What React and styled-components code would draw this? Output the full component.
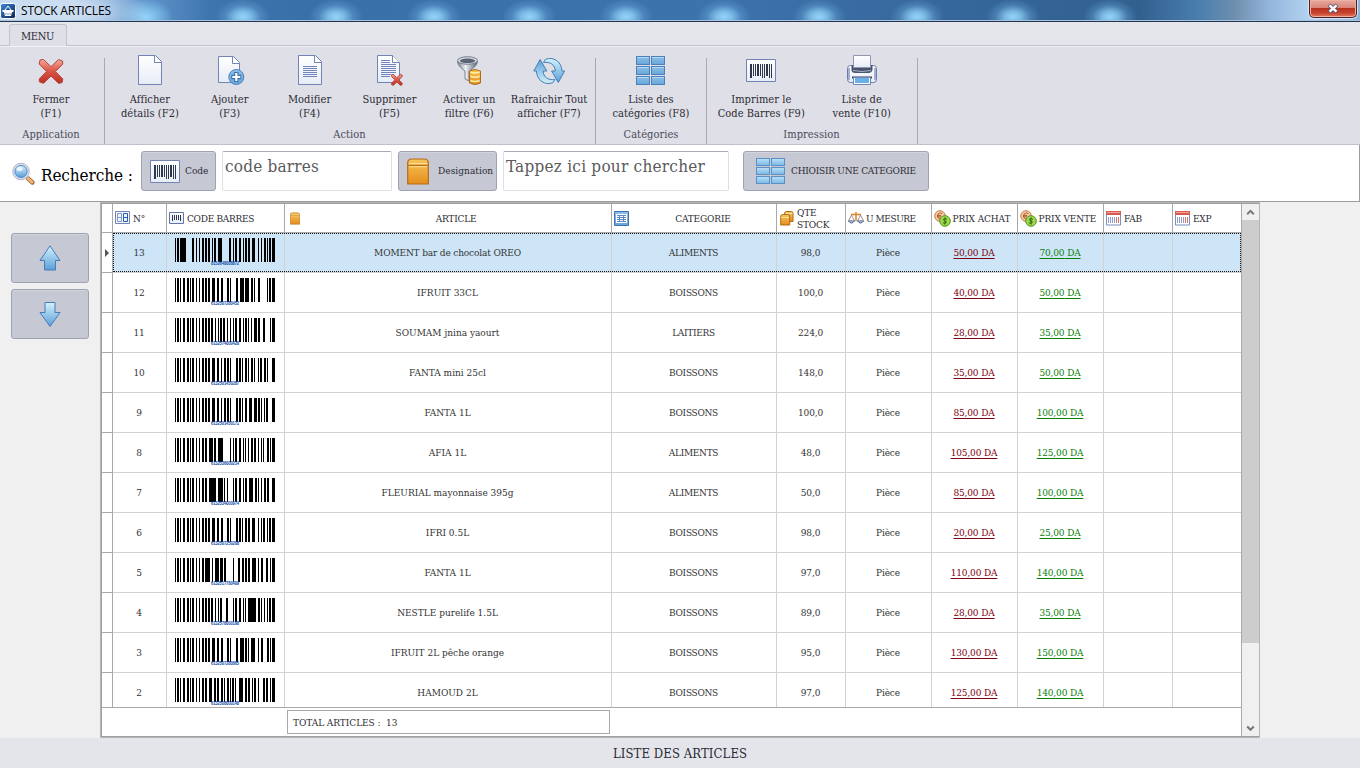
import React from "react";
import styled, { createGlobalStyle } from "styled-components";

const Global = createGlobalStyle`
  * { box-sizing: border-box; }
  body { margin: 0; overflow: hidden; background: #f0f0f0; }
`;
const serif = `"DejaVu Serif Condensed", "DejaVu Serif", serif`;

const glow = [243, 336, 434, 529, 626, 724, 819, 917, 1013, 1110]
  .map((x) => `radial-gradient(ellipse 27px 18px at ${x}px 17px, #93d4fa 0, #8ccdf5cc 30%, #6fb0e055 65%, #6fb0e000 100%)`)
  .join(",");

const Window = styled.div`
  width: 1360px; height: 768px; display: flex; flex-direction: column;
  font-family: ${serif}; font-stretch: condensed; font-size: 10px; color: #2b2b33;
  background: #f0f0f0; white-space: nowrap;
`;
const TitleBar = styled.header`
  height: 22px; flex: none; display: flex; justify-content: space-between; align-items: flex-start;
  border-bottom: 1px solid #253650; box-shadow: inset 0 -1px 0 #a9c3dd; padding: 0 3px 0 0;
  background:
    radial-gradient(ellipse 110px 30px at 40px 11px, #cfe0f2 0, #c8dbf0 45%, #b3cfea88 75%, #b3cfea00 100%),
    radial-gradient(ellipse 27px 18px at 146px 17px, #93d4fa 0, #8ccdf5cc 30%, #8ccdf500 100%),
    ${glow},
    linear-gradient(90deg, #a9c8e6 0, #8fb4dc 90px, #5d92ca 150px, #3f75ad 210px, #3a70aa 300px, #3c73ad 700px, #38699f 900px, #31608f 1140px, #4b7fae 1200px, #6f8fae 1235px, #94b6dc 1270px, #b4d3f2 1310px, #8cb0d6 1360px);
`;
const Title = styled.div`
  display: flex; align-items: center; gap: 5px; height: 21px; font: 12px "Open Sans", sans-serif;
  letter-spacing: -0.2px; color: #000;
`;
const CloseButton = styled.button`
  width: 48px; height: 18px; padding: 0 0 1px; display: grid; place-items: center; border: 1px solid #4c1f20; border-top: 0;
  border-radius: 0 0 5px 5px; box-shadow: inset 0 0 0 1px #efb0a4, 0 0 1px 1px #d9e6f4;
  background: linear-gradient(#e8aba0 0, #d98578 45%, #b8331f 50%, #c8412c 75%, #e07a5c);
`;
const MenuStrip = styled.nav`
  height: 24px; flex: none; background: #e5e6eb; border-bottom: 1px solid #c0c1ca; padding: 2px 0 0 9px; display: flex;
`;
const MenuTab = styled.div`
  width: 58px; height: 22px; display: grid; place-items: center; padding: 2px 1px 0 0; font-size: 11px; letter-spacing: -0.3px;
  background: #dfdfe8; border: 1px solid #c2c3cc; border-bottom: 0; border-radius: 3px 3px 0 0;
`;
const Ribbon = styled.section`
  height: 99px; flex: none; display: flex; background: #dfdfe8; border-top: 1px solid #f2f2f6; border-bottom: 1px solid #bfc0ca;
`;
const Group = styled.div`
  width: ${(p) => p.$w}px; height: 97px; display: flex; flex-direction: column;
  padding: 7px ${(p) => p.$pr ?? 5}px 0 ${(p) => p.$pl ?? 4}px;
  background: linear-gradient(#a9a9b0, #a9a9b0) right 0 bottom 0 / 1px 86px no-repeat;
`;
const Items = styled.div`display: flex; height: 73px;`;
const Item = styled.div`
  flex: 1 1 0; min-width: 0; display: flex; flex-direction: column; align-items: center; text-align: center;
  font-size: 11px; line-height: 14px; letter-spacing: 0.04px;
  svg { flex: none; margin-bottom: 7px; }
`;
const Line = styled.span`display: block;`;
const GroupName = styled.div`
  text-align: center; font-size: 11px; line-height: 14px; color: #4a4a58; margin-top: 1px; letter-spacing: 0.05px;
`;
const SearchBar = styled.section`
  height: 57px; flex: none; display: flex; align-items: flex-start; padding: 6px 0 0 11px; background: #fff;
  border-right: 1px solid #9c9c9c; border-bottom: 1px solid #9c9c9c;
`;
const SearchLabel = styled.div`
  width: 130px; height: 40px; display: flex; align-items: center; gap: 5px; font-size: 17px; color: #000; letter-spacing: -0.1px;
  span { padding-top: 8px; }
  svg { margin-top: 6px; }
`;
const Button = styled.button`
  width: ${(p) => p.$w}px; height: ${(p) => p.$h || 40}px; margin: 0 ${(p) => p.$mr || 0}px 0 0;
  padding: 0 0 0 ${(p) => p.$pl || 0}px; display: flex; align-items: center; justify-content: ${(p) => (p.$center ? "center" : "flex-start")};
  gap: ${(p) => p.$gap || 0}px; background: #c6c8d4; border: 1px solid #9ea2b2; border-radius: 3px;
  box-shadow: inset 0 1px 0 #d2d4de; font-family: inherit; font-stretch: inherit; font-size: 10px; color: #2b2b33;
  letter-spacing: ${(p) => p.$ls || 0}px; white-space: nowrap;
`;
const ButtonText = styled.span`padding-bottom: 2px;`;
const Field = styled.div`
  width: ${(p) => p.$w}px; height: 40px; margin-right: ${(p) => p.$mr}px; padding: 3px 0 0 2px; border: 1px solid #dddfe6;
  border-top-color: #a9abb3; border-radius: 2px; color: #5a5a5a; font-size: 17px; line-height: 23px; letter-spacing: ${(p) => p.$ls}px;
`;
const Main = styled.main`height: 536px; flex: none; display: flex;`;
const Side = styled.aside`width: 100px; padding: 31px 0 0 11px; display: flex; flex-direction: column; gap: 6px;`;
const Grid = styled.section`
  width: 1160px; height: 536px; display: flex; border: 1px solid #b4b4b4; box-shadow: inset 1px 1px 0 #a0a0a0, inset 0 -1px 0 #a0a0a0;
  padding: 1px 0 1px 1px; background: #fff;
`;
const Sheet = styled.div`width: 1140px; display: flex; flex-direction: column; border-right: 1px solid #a9a9a9;`;
const columns = "11px 54px 118px 327px 165px 69px 86px 86px 86px 69px 68px";
const Head = styled.div`
  display: grid; grid-template-columns: ${columns}; height: 29px; flex: none; border-bottom: 1px solid #a9a9a9;
`;
const HeadCell = styled.div`
  border-right: 1px solid #a9a9a9; display: flex; align-items: center; gap: ${(p) => p.$gap || 4}px; padding: 0 0 0 ${(p) => p.$pl ?? 2}px;
  line-height: 12px; letter-spacing: ${(p) => p.$ls ?? -0.2}px; overflow: hidden;
  &:last-child { border-right: 0; }
  svg { flex: none; }
`;
const HeadText = styled.span`
  flex: ${(p) => (p.$fill ? 1 : "none")}; text-align: ${(p) => (p.$fill ? "center" : "left")};
  padding: 1px ${(p) => (p.$fill ? 3 : 0)}px 0 0;
`;
const Rows = styled.div`height: 475px; flex: none; overflow: hidden; border-bottom: 1px solid #a9a9a9;`;
const Row = styled.div`
  display: grid; grid-template-columns: ${columns}; height: 40px; position: relative;
  background: ${(p) => (p.$selected ? "linear-gradient(90deg, #fff 11px, #cde5f7 11px)" : "#fff")};
  &::after {
    content: ""; display: ${(p) => (p.$selected ? "block" : "none")}; position: absolute; inset: 0 0 1px 11px; border: 1px dotted #111;
  }
`;
const Cell = styled.div`
  border-right: 1px solid #d2d2d2; border-bottom: 1px solid #d2d2d2; display: grid; place-items: center; padding-right: 1px;
  color: ${(p) => p.$color || "#333"}; text-decoration: ${(p) => (p.$color ? "underline" : "none")};
  letter-spacing: ${(p) => p.$ls ?? -0.15}px; text-underline-offset: 1.5px;
  &:first-child { border-color: #a9a9a9; padding: 0; }
  &:last-child { border-right: 0; }
`;
const BarCell = styled(Cell)`place-items: start; padding: 5px 0 0 8px; line-height: 0;`;
const Totals = styled.div`height: 28px; padding: 2px 0 0 185px;`;
const TotalBox = styled.div`
  width: 323px; height: 24px; border: 1px solid #a9a9a9; padding-left: 5px; line-height: 23px; letter-spacing: -0.05px; white-space: pre;
`;
const Scroll = styled.div`
  width: 17px; display: flex; flex-direction: column; align-items: center; justify-content: space-between; background: #f0f0f0;
`;
const ScrollEnd = styled.div`height: 16px; display: grid; place-items: center;`;
const Thumb = styled.div`width: 17px; height: 423px; background: #cdcdcd; margin-bottom: auto;`;
const Status = styled.footer`
  height: 30px; flex: none; background: #e4e5eb; display: grid; place-items: center; font-size: 13px; letter-spacing: 0.08px; color: #2b2b33;
`;
const DefsSvg = styled.svg`position: absolute; width: 0; height: 0;`;

const Defs = () => (
  <DefsSvg>
    <defs>
      <linearGradient id="page" x2="0" y2="1"><stop stopColor="#fff" /><stop offset="1" stopColor="#e6ecf7" /></linearGradient>
      <linearGradient id="red" x2="0" y2="1"><stop stopColor="#f5a99b" /><stop offset=".45" stopColor="#dc5a4b" /><stop offset="1" stopColor="#bd2f25" /></linearGradient>
      <linearGradient id="blue" x2="0" y2="1"><stop stopColor="#d3f2fc" /><stop offset="1" stopColor="#5b9fd8" /></linearGradient>
      <linearGradient id="tile" x2="0" y2="1"><stop stopColor="#8fc0e6" /><stop offset="1" stopColor="#66a6db" /></linearGradient>
      <linearGradient id="tileLight" x2="0" y2="1"><stop stopColor="#b9e0f7" /><stop offset="1" stopColor="#79b8e6" /></linearGradient>
      <linearGradient id="gold" x2="0" y2="1"><stop stopColor="#f6c55a" /><stop offset="1" stopColor="#e58e1c" /></linearGradient>
      <linearGradient id="steel" x2="1"><stop stopColor="#717c8c" /><stop offset=".4" stopColor="#f0f3f6" /><stop offset="1" stopColor="#56606f" /></linearGradient>
      <linearGradient id="navy" x1="0" x2="1" y2="1"><stop stopColor="#3d8ad8" /><stop offset="1" stopColor="#0c2250" /></linearGradient>
    </defs>
  </DefsSvg>
);
const Svg = ({ w = 32, h = w, vb, children }) => <svg width={w} height={h} viewBox={vb || `0 0 ${w} ${h}`} fill="none">{children}</svg>;

const crossPath = "M5 4.5 8.5 4 16 11.2 23.5 4 27.5 5.5 27.8 8.5 20.4 16 27.8 23.5 27 27.2 23.5 27.8 16 20.5 8.5 27.8 4.5 26.5 4.2 23.5 11.6 16 4.2 8.5Z";
const CrossIcon = () => <Svg><path transform="translate(0 1.500)" d={crossPath} fill="url(#red)" stroke="#b5443c" strokeLinejoin="round" /></Svg>;
const BlankSheet = ({ lines }) => (
  <>
    <path d="M4.500 1.500h17l6 6v23h-23z" fill="url(#page)" stroke="#7384b4" />
    <path d="M20.500 1.500v7h7" fill="#fff" stroke="#7384b4" />
    {lines && <path d={lines} stroke="#7283bd" />}
  </>
);
const PageIcon = () => <Svg><BlankSheet /></Svg>;
const EditPageIcon = () => <Svg><BlankSheet lines="M9 12.500h14M9 14.500h14M9 16.500h14M9 18.500h14M9 20.500h14M9 22.500h14" /></Svg>;
const AddPageIcon = () => (
  <Svg>
    <path d="M4.500 2.500h15l6 6v20h-21z" fill="url(#page)" stroke="#7384b4" /><path d="M18.500 2.500v7h7" fill="#fff" stroke="#7384b4" />
    <circle cx="22.300" cy="23" r="7.500" fill="url(#tile)" stroke="#4a83bb" /><path d="M22.300 18v10M17.300 23h10" stroke="#3d73ad" strokeWidth="4.400" /><path d="M22.300 19v8M18.300 23h8" stroke="#fff" strokeWidth="2.200" />
  </Svg>
);
const DeletePageIcon = () => (
  <Svg>
    <path d="M4.500 1.500h15l7 7v20h-22z" fill="url(#page)" stroke="#7384b4" /><path d="M19.500 1.500v7h7" fill="#fff" stroke="#7384b4" />
    <path d="M8 6.500h9M8 8.500h9M8 10.500h15M8 12.500h15M8 14.500h15M8 16.500h15M8 18.500h15M8 20.500h10M8 22.500h9" stroke="#7283bd" />
    <g transform="translate(16.500 18.500) scale(.46)"><path d={crossPath} fill="url(#red)" stroke="#b5443c" strokeWidth="2" /></g>
  </Svg>
);
const FilterIcon = () => (
  <Svg>
    <path d="M4.500 7c0 5 5 8 7.500 10v8l4 2v-10C20 15 24.500 11 24.500 7z" fill="url(#steel)" stroke="#7a8391" />
    <ellipse cx="14.500" cy="6.500" rx="10" ry="3.800" fill="#cfd5dd" stroke="#7a8391" /><ellipse cx="14.500" cy="6.800" rx="7.500" ry="2.300" fill="#5a6474" />
    <path d="M16.500 17q5.500-3 11 0v12q-5.500 3-11 0z" fill="url(#gold)" stroke="#b26a16" />
    <path d="M17.500 18q4.500 2 9 0M17.500 22.300q4.500 2 9 0M17.500 26.500q4.500 2 9 0" stroke="#fff0ad" strokeWidth="1.600" />
  </Svg>
);
const refreshArm = "M10.500 8.500 12.500 5.300C20 2.500 28.500 7 29 17h2.600L25.300 28.500 18.600 17h3.600c0-6-5-9.500-11.700-8.500z";
const RefreshIcon = () => (
  <Svg>
    <g fill="url(#blue)" stroke="#447fb6" strokeLinejoin="round">
      <path d={refreshArm} /><path transform="rotate(180 16.200 17)" d={refreshArm} />
    </g>
  </Svg>
);
const TilesIcon = ({ light }) => (
  <Svg>
    {[1.5, 16.5].map((x) => (light ? [3.5, 12.5, 21.5] : [2.5, 12.5, 22.5]).map((y) => (
      <g key={`${x}-${y}`}>
        <rect x={x} y={y} width="13" height={light ? 7 : 8} fill={light ? "url(#tileLight)" : "url(#tile)"} stroke={light ? "#5b8fc6" : "#4d80bb"} />
        <path d={`M${x + 1} ${y + 1}h11`} stroke="#b5daf4" />
      </g>
    )))}
  </Svg>
);
const BarsIcon = () => (
  <Svg>
    <path d="M1.500 5.500h29v22h-29z" fill="url(#page)" stroke="#7384b4" />
    <path d="M5 10h2v14H5zM8 10h1v12H8zM10 10h1v12h-1zM12 10h2v12h-2zM15 10h1v12h-1zM17 10h1v14h-1zM19 10h1v14h-1zM21 10h2v12h-2zM24 10h1v14h-1zM26 10h1v14h-1z" fill="#2e374c" />
  </Svg>
);
const SmallBarsIcon = () => (
  <Svg w={16}><path d="M.5 2.500h14v11H.5z" fill="url(#page)" stroke="#6376b0" /><path d="M3 5h1v6H3zM5 5h1v5H5zM7 5h1v5H7zM9 5h1v5H9zM11 5h1v6h-1z" fill="#2e374c" /></Svg>
);
const PrinterIcon = () => (
  <Svg>
    <rect x="1.500" y="11.500" width="29" height="17" rx="3" fill="url(#page)" stroke="#6a7bb0" />
    <path d="M3 14v12M29 14v12" stroke="#a5b0d4" strokeWidth="2" />
    <path d="M5.500 11h21v5q-1 3-4 3h-13q-4 0-4-3z" fill="#48536c" /><path d="M7 16.500q9 2 18 0" stroke="#a8b1c6" />
    <path d="M7.500 1.500h17v12h-17z" fill="url(#page)" stroke="#9098b0" />
    <path d="M6 23.500h20" stroke="#39455f" strokeWidth="2" /><path d="M7.500 23.500h17v7h-17z" fill="#fff" stroke="#7384b4" /><path d="M9 24h14v5H9z" fill="#68b0e6" />
  </Svg>
);
const BasketIcon = () => (
  <Svg w={16}><rect x=".5" y=".5" width="15" height="15" rx="2" fill="url(#navy)" stroke="#fff" /><path d="m5 7 3-4 3 4" stroke="#fff" /><path d="M2.500 7h11v2h-11zM4 9h8l-1 4H5z" fill="#fff" /><path d="M6 10v2M8 10v2M10 10v2" stroke="#4a74a8" strokeWidth=".7" /></Svg>
);
const SearchIcon = () => (
  <Svg w={25}><path d="m17 16.500 4.500 4" stroke="#a56b36" strokeWidth="4.400" strokeLinecap="round" /><path d="m17 16.500 4 3.600" stroke="#f0b678" strokeWidth="2.800" strokeLinecap="round" /><circle cx="10" cy="9.500" r="8.300" fill="#d5dbea" stroke="#b3b8cd" /><circle cx="10" cy="9.500" r="6" fill="url(#blue)" stroke="#5585cf" /><ellipse cx="8.500" cy="7" rx="3" ry="2.200" fill="#fff" opacity=".75" /></Svg>
);
const BoxIcon = ({ w = 22, h = 27 }) => (
  <Svg w={w} h={h} vb="0 0 22 27"><path d="M.7 26V5q0-4 4-4h12.600q4 0 4 4v21z" fill="url(#gold)" stroke="#b36a1c" strokeWidth="1.200" /><path d="M1.500 7.500h19" stroke="#b96d16" strokeWidth="1.200" /><path d="M2 5.500h18M2 8.700h18" stroke="#fbe09a" /></Svg>
);
const BoxesIcon = () => (
  <Svg w={14} h={16}><path d="M4.500 11.500v-8q0-2 2-2h5q1.500 0 1.500 2v8z" fill="url(#gold)" stroke="#b3681a" /><path d="M5.500 3.500h7" stroke="#fbe09a" /><path d="M.7 15V6.500q0-2 2-2h5q2 0 2 2V15z" fill="url(#gold)" stroke="#b3681a" /><path d="M1.500 7.500h7.500" stroke="#fbe09a" /></Svg>
);
const ArrowIcon = ({ down }) => (
  <Svg w={22} h={26}>
    <path d={down ? "M11 25.500 1 11.500h5v-10h10v10h5z" : "M11 .8 21 15.500h-4.500v9.500h-11v-9.500H1z"} fill="url(#blue)" stroke="#4a7ab8" strokeLinejoin="round" />
  </Svg>
);
const NumberIcon = () => (
  <Svg w={15} h={14}><path d="M.5.500h14v12H.5z" fill="#f2f6fc" stroke="#7384b4" /><path d="M2.500 2.500h4v8h-4zM2.500 6.500h4" stroke="#8298c0" /><path d="M8.500 2.500h4v8h-4zM8.500 6.500h4" stroke="#1f5fb8" /></Svg>
);
const TableIcon = () => (
  <Svg w={15} h={15}><path d="M.5.500h14v14H.5z" fill="url(#tile)" stroke="#3f70b6" /><path d="M2 3h11v9H2z" fill="#fff" /><path d="M3 4.500h9M3 6.500h9M3 8.500h9M3 10.500h9M5.500 4v7M9.500 4v7" stroke="#5f88c2" /></Svg>
);
const ScaleIcon = () => (
  <Svg w={16} h={15}><path d="M8 1v9M3 3.500h10" stroke="#d3862f" strokeWidth="1.500" /><circle cx="8" cy="2.300" r="1.300" fill="#eda842" /><path d="m3.500 4-3 6m3-6 3 6M12.500 4l-3 6m3-6 3 6" stroke="#8a7774" strokeWidth=".8" /><path d="M.5 10h6q-3 4-6 0zM9.500 10h6q-3 4-6 0z" fill="#f2f5fb" stroke="#42578d" /></Svg>
);
const CoinsIcon = () => (
  <Svg w={17} h={17}>
    <circle cx="6" cy="6" r="5.300" fill="#f3cda0" stroke="#c47a4a" /><path d="M8.500 3.800a3 3 0 1 0 0 4.400M3 5.400h4M3 6.800h4" stroke="#b35a2b" />
    <circle cx="11" cy="11" r="5.300" fill="#a0da48" stroke="#55902a" /><path d="M13 9.300q-2-1.200-3.300-.3t1 1.800q2.500.7 1.300 2-1.500 1-3.200-.1M11 7.300v7.500" stroke="#2f6616" />
  </Svg>
);
const CalendarIcon = () => (
  <Svg w={15} h={15}><path d="M.5.500h14v13.500H.5z" fill="#fff" stroke="#7c8fc4" /><path d="M0 0h15v4H0z" fill="#d9594f" /><path d="M1 1.500h13" stroke="#f0a59c" /><path d="M2.500 6v6M4.500 6v6M6.500 6v6M8.500 6v6" stroke="#8f9dc8" /><path d="M10.500 6v6M12.500 6v6" stroke="#da7468" /></Svg>
);
const Chevron = ({ down }) => <Svg w={9} h={7}><path d={down ? "m1.200 1.500 3.300 3.300 3.300-3.300" : "m1.200 5.200 3.300-3.300 3.300 3.300"} stroke="#777" strokeWidth="2" /></Svg>;

const prefix = "0:1 2:2 5:1 8:2 12:2 15:1 17:2 21:1 24:1 27:2 ";
const rows = [
  [13, "MOMENT bar de chocolat OREO", "ALIMENTS", "98,0", "50,00", "70,00", "0:1 2:2 5:6 17:2 21:1 24:1 27:2 30:2 33:2 37:1 39:2 43:4 54:2 58:1 60:2 64:2 68:1 70:2 73:2 77:3 83:1 86:1 89:2 92:1 94:2 97:3", "8152648008872"],
  [12, "IFRUIT 33CL", "BOISSONS", "100,0", "40,00", "50,00", prefix + "30:2 33:2 37:3 42:2 46:2 52:2 55:1 61:2 65:4 70:4 76:2 79:1 83:2 92:1 94:2 97:3", "6132507280452"],
  [11, "SOUMAM jnina yaourt", "LAITIERS", "224,0", "28,00", "35,00", prefix + "30:2 33:2 36:2 40:1 43:1 45:2 48:2 52:1 55:1 58:1 60:2 64:2 68:1 70:2 73:1 76:1 79:3 83:2 88:2 95:1 97:3", "6132574000428"],
  [10, "FANTA mini 25cl", "BOISSONS", "148,0", "35,00", "50,00", prefix + "30:2 33:2 37:3 42:2 46:1 49:2 52:2 55:1 61:2 64:2 67:1 70:2 73:1 76:2 79:1 83:1 85:2 89:2 92:1 97:3", "6132501450287"],
  [9, "FANTA 1L", "BOISSONS", "100,0", "85,00", "100,00", prefix + "30:2 33:2 37:3 42:2 46:1 49:2 52:2 55:1 61:2 64:2 67:1 70:2 74:3 79:3 83:2 86:1 89:1 91:2 97:3", "6132501450171"],
  [8, "AFIA 1L", "ALIMENTS", "48,0", "105,00", "125,00", prefix + "30:2 34:4 39:2 43:5 55:1 58:1 60:2 64:2 68:1 70:1 73:1 76:2 79:2 83:1 86:1 88:1 92:2 95:1 97:3", "6132536000214"],
  [7, "FLEURIAL mayonnaise 395g", "ALIMENTS", "50,0", "85,00", "100,00", prefix + "30:2 34:7 43:5 49:1 52:1 58:1 60:2 64:2 68:1 70:2 74:4 80:2 83:1 86:1 89:2 92:2 97:3", "6132534000974"],
  [6, "IFRI 0.5L", "BOISSONS", "98,0", "20,00", "25,00", prefix + "30:2 33:2 37:3 42:2 46:2 52:2 55:1 61:2 64:2 67:1 70:2 73:2 77:3 83:1 86:1 88:2 92:1 94:2 97:3", "6132507250208"],
  [5, "FANTA 1L", "BOISSONS", "97,0", "110,00", "140,00", prefix + "30:5 37:1 40:4 45:3 49:2 58:1 63:2 67:2 70:2 73:2 77:4 83:1 86:2 91:2 95:1 97:3", "6132517780409"],
  [4, "NESTLE purelife 1.5L", "BOISSONS", "89,0", "28,00", "35,00", prefix + "30:2 33:2 36:2 40:1 43:1 45:2 51:2 58:1 60:2 64:2 68:1 70:1 73:8 83:2 86:1 89:1 92:1 94:2 97:3", "6132578000198"],
  [3, "IFRUIT 2L pêche orange", "BOISSONS", "95,0", "130,00", "150,00", prefix + "30:2 33:2 37:3 42:2 46:2 52:2 55:1 61:2 65:4 70:2 73:1 76:4 83:1 86:2 92:2 95:1 97:3", "6132507280865"],
  [2, "HAMOUD 2L", "BOISSONS", "97,0", "125,00", "140,00", prefix + "30:2 34:3 39:2 42:2 46:2 49:1 52:2 55:1 57:2 60:1 64:4 70:2 73:2 77:1 79:2 83:1 88:2 91:2 95:1 97:3", "6132508000148"],
];
const Barcode = ({ bars, code }) => (
  <svg width="100" height="28" viewBox="0 0 100 28">
    {bars.split(" ").map((b) => { const [x, w] = b.split(":"); return <rect key={b} x={x} width={w} height="24" fill="#000" shapeRendering="crispEdges" />; })}
    <text x="36" y="27.200" fontSize="4.500" fontWeight="bold" fontFamily="Liberation Sans, sans-serif" fill="#0f4ba8" textLength="28" lengthAdjust="spacingAndGlyphs">{code}</text>
  </svg>
);

const Action = ({ icon, a, b }) => <Item>{icon}<Line>{a}</Line><Line>{b}</Line></Item>;

export default function App() {
  return (
    <Window>
      <Global /><Defs />
      <TitleBar>
        <Title><BasketIcon />STOCK ARTICLES</Title>
        <CloseButton><Svg w={12} h={11}><path d="m2 2 8 7M10 2 2 9" stroke="#54516a" strokeWidth="4" /><path d="m2.500 2.300 7 6.400M9.500 2.300l-7 6.400" stroke="#fff" strokeWidth="2.500" /></Svg></CloseButton>
      </TitleBar>
      <MenuStrip><MenuTab>MENU</MenuTab></MenuStrip>
      <Ribbon>
        <Group $w={105} $pl={2}><Items><Action icon={<CrossIcon />} a="Fermer" b="(F1)" /></Items><GroupName>Application</GroupName></Group>
        <Group $w={491} $pl={5} $pr={7}>
          <Items>
            <Action icon={<PageIcon />} a="Afficher" b="détails (F2)" />
            <Action icon={<AddPageIcon />} a="Ajouter" b="(F3)" />
            <Action icon={<EditPageIcon />} a="Modifier" b="(F4)" />
            <Action icon={<DeletePageIcon />} a="Supprimer" b="(F5)" />
            <Action icon={<FilterIcon />} a="Activer un" b="filtre (F6)" />
            <Action icon={<RefreshIcon />} a="Rafraichir Tout" b="afficher (F7)" />
          </Items>
          <GroupName>Action</GroupName>
        </Group>
        <Group $w={111}><Items><Action icon={<TilesIcon />} a="Liste des" b="catégories (F8)" /></Items><GroupName>Catégories</GroupName></Group>
        <Group $w={211} $pr={6}>
          <Items><Action icon={<BarsIcon />} a="Imprimer le" b="Code Barres (F9)" /><Action icon={<PrinterIcon />} a="Liste de" b="vente (F10)" /></Items>
          <GroupName>Impression</GroupName>
        </Group>
      </Ribbon>
      <SearchBar>
        <SearchLabel><SearchIcon /><span>Recherche :</span></SearchLabel>
        <Button $w={75} $mr={6} $pl={7} $gap={4}><BarsIcon /><ButtonText>Code</ButtonText></Button>
        <Field $w={170} $mr={6} $ls={0.2}>code barres</Field>
        <Button $w={99} $mr={6} $pl={8} $gap={9} $ls={0.05}><BoxIcon /><ButtonText>Designation</ButtonText></Button>
        <Field $w={226} $mr={14} $ls={0.24}>Tappez ici pour chercher</Field>
        <Button $w={186} $pl={11} $gap={4} $ls={-0.25}><TilesIcon light /><ButtonText>CHIOISIR UNE CATEGORIE</ButtonText></Button>
      </SearchBar>
      <Main>
        <Side>
          <Button $w={78} $h={50} $center><ArrowIcon /></Button>
          <Button $w={78} $h={50} $center><ArrowIcon down /></Button>
        </Side>
        <Grid>
          <Sheet>
            <Head>
              <HeadCell />
              <HeadCell $gap={3}><NumberIcon /><HeadText>N°</HeadText></HeadCell>
              <HeadCell $gap={2} $ls={-0.28}><SmallBarsIcon /><HeadText>CODE BARRES</HeadText></HeadCell>
              <HeadCell $pl={5}><BoxIcon w={10} h={13} /><HeadText $fill>ARTICLE</HeadText></HeadCell>
              <HeadCell $ls={-0.15}><TableIcon /><HeadText $fill>CATEGORIE</HeadText></HeadCell>
              <HeadCell $pl={3} $gap={3}><BoxesIcon /><HeadText>QTE<br />STOCK</HeadText></HeadCell>
              <HeadCell $gap={2} $ls={-0.45}><ScaleIcon /><HeadText>U MESURE</HeadText></HeadCell>
              <HeadCell $gap={1.5} $ls={-0.1}><CoinsIcon /><HeadText>PRIX ACHAT</HeadText></HeadCell>
              <HeadCell $gap={1.5} $ls={-0.15}><CoinsIcon /><HeadText>PRIX VENTE</HeadText></HeadCell>
              <HeadCell $gap={3}><CalendarIcon /><HeadText>FAB</HeadText></HeadCell>
              <HeadCell $gap={3}><CalendarIcon /><HeadText>EXP</HeadText></HeadCell>
            </Head>
            <Rows>
              {rows.map(([n, name, cat, qty, buy, sell, bars, code], i) => (
                <Row key={n} $selected={i === 0}>
                  <Cell>{i === 0 && <Svg w={4} h={8}><path d="M0 0v8l4-4z" fill="#555" /></Svg>}</Cell>
                  <Cell>{n}</Cell>
                  <BarCell><Barcode bars={bars} code={code} /></BarCell>
                  <Cell $ls={i === 0 ? -0.15 : 0}>{name}</Cell><Cell $ls={-0.3}>{cat}</Cell><Cell>{qty}</Cell><Cell>Pièce</Cell>
                  <Cell $color="#7c0010">{buy} DA</Cell><Cell $color="#0a800a">{sell} DA</Cell><Cell /><Cell />
                </Row>
              ))}
            </Rows>
            <Totals><TotalBox>TOTAL ARTICLES :  13</TotalBox></Totals>
          </Sheet>
          <Scroll><ScrollEnd><Chevron /></ScrollEnd><Thumb /><ScrollEnd><Chevron down /></ScrollEnd></Scroll>
        </Grid>
      </Main>
      <Status>LISTE DES ARTICLES</Status>
    </Window>
  );
}
